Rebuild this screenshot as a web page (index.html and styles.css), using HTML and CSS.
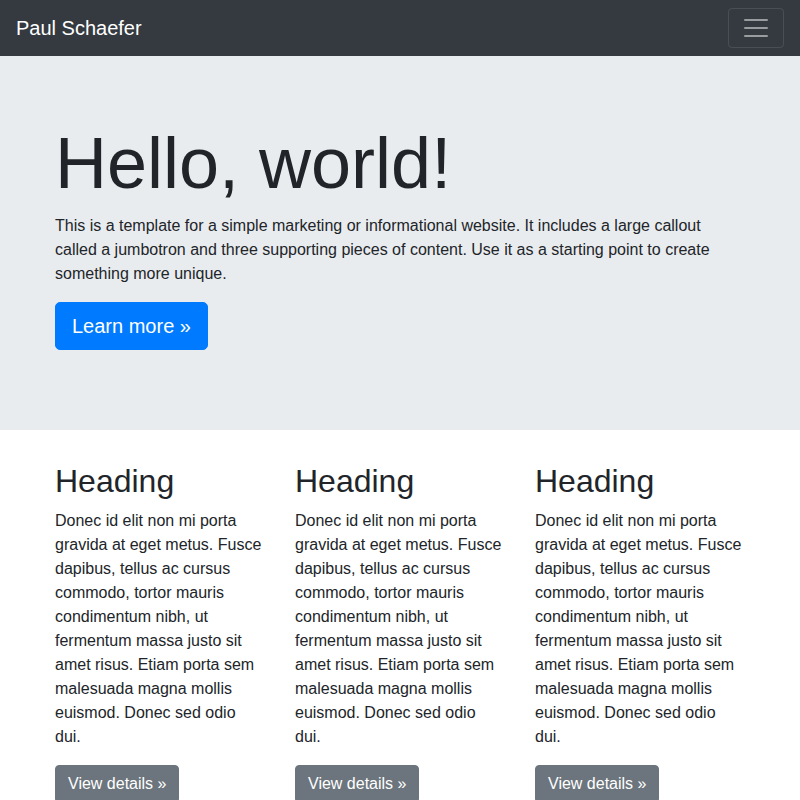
FILE: index.html
```html
<!DOCTYPE html>
<html lang="en">
<head>
<meta charset="utf-8">
<title>Jumbotron</title>
<link rel="stylesheet" href="styles.css">
</head>
<body>
<nav class="navbar">
  <a class="brand" href="#">Paul Schaefer</a>
  <button class="toggler" type="button" aria-label="Toggle navigation">
    <svg class="toggler-icon" viewBox="0 0 30 30" width="30" height="30"><path d="M4 7h22M4 15h22M4 23h22" stroke="rgba(255,255,255,0.5)" stroke-width="2" stroke-linecap="round" fill="none"/></svg>
  </button>
</nav>
<main>
  <section class="jumbotron">
    <div class="container">
      <h1 class="display">Hello, world!</h1>
      <p class="lead-text">This is a template for a simple marketing or informational website. It includes a large callout called a jumbotron and three supporting pieces of content. Use it as a starting point to create something more unique.</p>
      <p class="cta"><a class="btn btn-primary btn-lg" href="#">Learn more &raquo;</a></p>
    </div>
  </section>
  <div class="container">
    <div class="row">
      <div class="col">
        <h2>Heading</h2>
        <p>Donec id elit non mi porta gravida at eget metus. Fusce dapibus, tellus ac cursus commodo, tortor mauris condimentum nibh, ut fermentum massa justo sit amet risus. Etiam porta sem malesuada magna mollis euismod. Donec sed odio dui.</p>
        <p><a class="btn btn-secondary" href="#">View details &raquo;</a></p>
      </div>
      <div class="col">
        <h2>Heading</h2>
        <p>Donec id elit non mi porta gravida at eget metus. Fusce dapibus, tellus ac cursus commodo, tortor mauris condimentum nibh, ut fermentum massa justo sit amet risus. Etiam porta sem malesuada magna mollis euismod. Donec sed odio dui.</p>
        <p><a class="btn btn-secondary" href="#">View details &raquo;</a></p>
      </div>
      <div class="col">
        <h2>Heading</h2>
        <p>Donec id elit non mi porta gravida at eget metus. Fusce dapibus, tellus ac cursus commodo, tortor mauris condimentum nibh, ut fermentum massa justo sit amet risus. Etiam porta sem malesuada magna mollis euismod. Donec sed odio dui.</p>
        <p><a class="btn btn-secondary" href="#">View details &raquo;</a></p>
      </div>
    </div>
  </div>
</main>
</body>
</html>
```

FILE: styles.css
```css
* { box-sizing: border-box; }
html, body { margin: 0; padding: 0; }
body {
  font-family: "Liberation Sans", Arial, sans-serif;
  font-size: 16px;
  line-height: 1.5;
  color: #212529;
  background: #fff;
}
.navbar {
  height: 56px;
  background: #343a40;
  display: flex;
  align-items: center;
  justify-content: space-between;
  padding: 8px 16px;
}
.brand {
  color: #fff;
  text-decoration: none;
  font-size: 20px;
  line-height: 30px;
  padding: 5px 0;
}
.toggler {
  width: 56px;
  height: 40px;
  padding: 4px 12px;
  background: transparent;
  border: 1px solid rgba(255,255,255,0.1);
  border-radius: 4px;
  display: flex;
  align-items: center;
  justify-content: center;
}
.toggler-icon { display: block; }
.container {
  width: 720px;
  margin: 0 auto;
  padding: 0 15px;
}
.jumbotron {
  background: #e9ecef;
  padding: 64px 0;
  margin-bottom: 32px;
}
.display {
  font-size: 72px;
  font-weight: 300;
  line-height: 1.2;
  margin: 0 0 8px;
}
.lead-text { margin: 0 0 16px; }
.cta { margin: 0 0 16px; }
.btn {
  display: inline-block;
  color: #fff;
  text-decoration: none;
  border: 1px solid transparent;
  border-radius: 4px;
  padding: 6px 12px;
  font-size: 16px;
  line-height: 24px;
}
.btn-lg {
  padding: 8px 16px;
  font-size: 20px;
  line-height: 30px;
  border-radius: 5px;
}
.btn-primary { background: #007bff; border-color: #007bff; }
.btn-secondary { background: #6c757d; border-color: #6c757d; }
.row {
  display: grid;
  grid-template-columns: repeat(3, 1fr);
  margin: 0 -15px;
}
.col { padding: 0 15px; }
.col h2 {
  font-size: 32px;
  font-weight: 500;
  line-height: 1.2;
  margin: 0 0 8px;
}
.col p { margin: 0 0 16px; }
```
